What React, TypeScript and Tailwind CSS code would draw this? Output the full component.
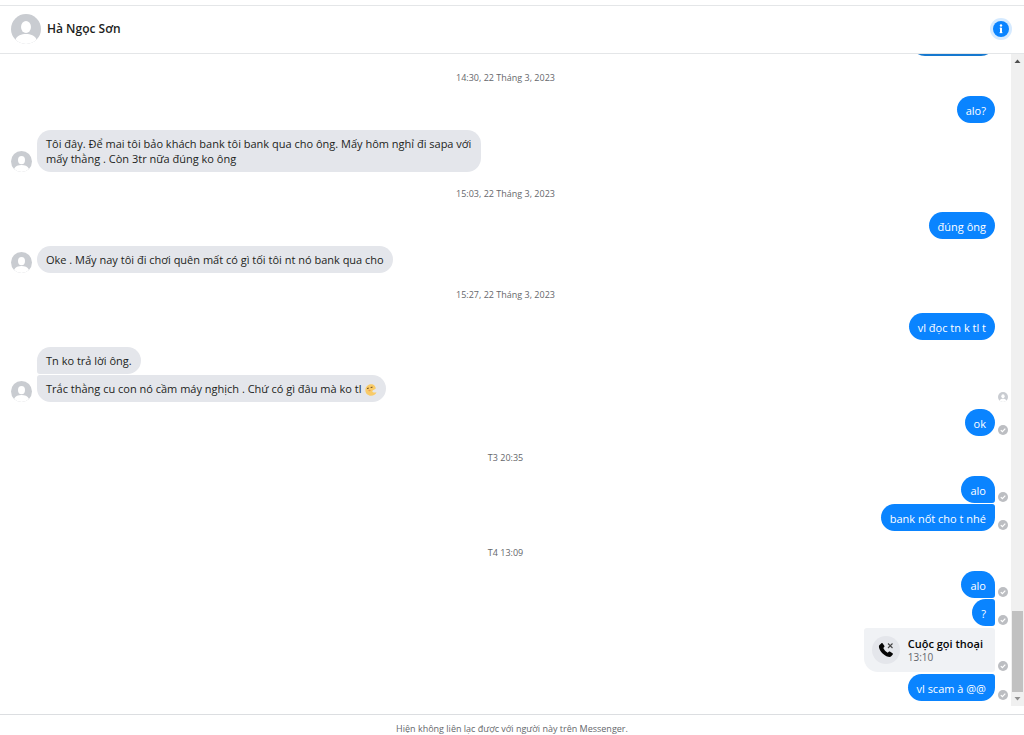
import React from "react";

const SHAPES = {
  single: "rounded-[14px]",
  rightFirst: "rounded-[14px] rounded-br-[3px]",
  rightMiddle: "rounded-[14px] rounded-r-[3px]",
  rightLast: "rounded-[14px] rounded-tr-[3px]",
  leftFirst: "rounded-[14px] rounded-bl-[3px]",
  leftLast: "rounded-[14px] rounded-tl-[3px]",
};
type Shape = keyof typeof SHAPES;

function Avatar({ className }: { className: string }) {
  return (
    <svg viewBox="0 0 30 30" className={className} role="img" aria-label="Hà Ngọc Sơn">
      <clipPath id="avatar-disc">
        <circle cx="15" cy="15" r="15" />
      </clipPath>
      <g clipPath="url(#avatar-disc)">
        <rect width="30" height="30" fill="#c9ccd1" />
        <ellipse cx="15" cy="13" rx="5" ry="6" fill="#fff" />
        <path d="M4.500 30V25.500C6 21.500 10.500 20 15 20S24 21.500 25.500 25.500V30Z" fill="#fff" />
      </g>
    </svg>
  );
}

function Delivered() {
  return (
    <svg viewBox="0 0 10 10" className="mb-px size-2.5" role="img" aria-label="Đã gửi">
      <circle cx="5" cy="5" r="5" fill="#bcbec2" />
      <path d="M2.800 5.100 4.400 6.700 7.300 3.600" fill="none" stroke="#fff" strokeWidth="1.200" />
    </svg>
  );
}

function MoonFace() {
  return (
    <svg viewBox="0 0 12 12" className="ml-1 inline-block size-3" role="img" aria-label="mặt trăng">
      <path d="M8 .5C4.500-.4 .8 1.800 .4 5.500C0 9 2.800 11.700 6 11.700C8.600 11.700 10.800 10.300 11.500 8.300C10.300 8.800 8.600 8.700 7.700 8C7.200 7.500 7.300 6.700 8 6.300L10.700 4.800C10.800 3 9.800 1.200 8 .5Z" fill="#f8cb69" />
      <path d="M2 4.500 3.800 4.100M5.700 3.500 7.500 3.200" stroke="#6b4a1f" strokeWidth="1" />
      <ellipse cx="4.500" cy="6.500" rx="1.200" ry=".8" fill="#f09a4a" />
    </svg>
  );
}

function Stamp({ children }: { children: React.ReactNode }) {
  return (
    <div className="flex h-10 items-center justify-center pt-1">
      <time className="text-[9px] leading-4 text-[#65676b]">{children}</time>
    </div>
  );
}

function Sent({ text, shape = "single", status }: { text: string; shape?: Shape; status?: boolean }) {
  return (
    <div className="flex items-end justify-end">
      <p className={`bg-[#0a84ff] px-[9px] pt-[7px] pb-[5px] text-white ${SHAPES[shape]}`}>{text}</p>
      <span className="flex w-4 justify-center">{status && <Delivered />}</span>
    </div>
  );
}

function Received({
  children,
  shape = "single",
  avatar = true,
  seen,
}: {
  children: React.ReactNode;
  shape?: Shape;
  avatar?: boolean;
  seen?: boolean;
}) {
  return (
    <div className="flex items-end pl-[11px]">
      <span className="w-[26px] shrink-0">{avatar && <Avatar className="size-[21px]" />}</span>
      <p className={`max-w-[444px] bg-[#e4e6eb] px-[9px] py-1.5 text-[#1c1e21] ${SHAPES[shape]}`}>{children}</p>
      {seen && (
        <span className="ml-auto flex w-4 justify-center">
          <Avatar className="size-2.5" />
        </span>
      )}
    </div>
  );
}

function MissedCall() {
  return (
    <div className="my-px flex items-end justify-end">
      <div className="flex h-11 items-center gap-2 rounded-[3px] rounded-bl-[14px] bg-[#f0f2f5] pr-3 pl-2">
        <span className="flex size-7 items-center justify-center rounded-full bg-[#e4e6eb]">
          <svg viewBox="0 0 16 16" className="size-4" aria-hidden="true">
            <path
              d="M1.300 3.200 3.200 1.400C3.700 1 4.300 1 4.700 1.500L6.300 3.700C6.700 4.200 6.600 4.700 6.200 5.100L5.300 6.100C6 7.900 7.800 9.800 9.700 10.700L10.800 9.800C11.200 9.400 11.800 9.400 12.200 9.700L14.500 11.300C15 11.700 15 12.300 14.600 12.700L12.900 14.500C11.900 15.500 8 14.700 4.600 11.400C1.300 8.100 .3 4.400 1.300 3.200Z"
              fill="#050505"
            />
            <path d="M10 1.500 14.500 6M14.500 1.500 10 6" stroke="#444" strokeWidth="1.100" />
          </svg>
        </span>
        <div>
          <p className="text-[11px] leading-[15px] font-semibold text-[#050505]">Cuộc gọi thoại</p>
          <p className="text-[10px] leading-[13px] text-[#65676b]">13:10</p>
        </div>
      </div>
      <span className="flex w-4 justify-center">
        <Delivered />
      </span>
    </div>
  );
}

function Stack({ children }: { children: React.ReactNode }) {
  return <div className="flex flex-col gap-px">{children}</div>;
}

function Exchange({ children }: { children: React.ReactNode }) {
  return <div className="flex flex-col gap-[7px]">{children}</div>;
}

export default function App() {
  return (
    <div className="flex h-screen flex-col overflow-hidden bg-white pt-[5px] font-['Open_Sans','Noto_Sans',sans-serif] text-[11px] leading-[15px]">
      <header className="flex h-[49px] shrink-0 items-center justify-between border-y border-[#e4e6e8] pr-3 pb-0.5 pl-[11px]">
        <div className="flex items-center gap-1.5">
          <Avatar className="size-[30px]" />
          <h1 className="text-xs leading-4 font-semibold text-[#1c1e21]">Hà Ngọc Sơn</h1>
        </div>
        <button type="button" aria-label="Thông tin" className="flex size-[22px] items-center justify-center rounded-full bg-[#d5eaff]">
          <svg viewBox="0 0 16 16" className="size-4" aria-hidden="true">
            <circle cx="8" cy="8" r="8" fill="#0a84ff" />
            <circle cx="8" cy="4.500" r="1.200" fill="#fff" />
            <path d="M8 6.800V12" fill="none" stroke="#fff" strokeWidth="2" />
            <path d="M6.700 7.200H8M6.500 11.700H9.500" fill="none" stroke="#fff" strokeWidth=".8" />
          </svg>
        </button>
      </header>

      <div className="flex min-h-0 flex-1">
        <main className="min-w-0 flex-1 overflow-hidden">
          <div className="flex h-0.5 items-end justify-end overflow-hidden pr-4" aria-hidden="true">
            <div className="h-7 w-[84px] shrink-0 rounded-[14px] bg-[#1578cf]" />
          </div>
          <Stamp>14:30, 22 Tháng 3, 2023</Stamp>
          <Exchange>
            <Sent text="alo?" />
            <Received>
              Tôi đây. Để mai tôi bảo khách bank tôi bank qua cho ông. Mấy hôm nghỉ đi sapa với mấy thằng . Còn 3tr nữa đúng ko ông
            </Received>
          </Exchange>
          <Stamp>15:03, 22 Tháng 3, 2023</Stamp>
          <Exchange>
            <Sent text="đúng ông" />
            <Received>Oke . Mấy nay tôi đi chơi quên mất có gì tối tôi nt nó bank qua cho</Received>
          </Exchange>
          <Stamp>15:27, 22 Tháng 3, 2023</Stamp>
          <Exchange>
            <Sent text="vl đọc tn k tl t" />
            <Stack>
              <Received shape="leftFirst" avatar={false}>
                Tn ko trả lời ông.
              </Received>
              <Received shape="leftLast" seen>
                Trắc thằng cu con nó cầm máy nghịch . Chứ có gì đâu mà ko tl
                <MoonFace />
              </Received>
            </Stack>
            <Sent text="ok" status />
          </Exchange>
          <Stamp>T3 20:35</Stamp>
          <Stack>
            <Sent text="alo" shape="rightFirst" status />
            <Sent text="bank nốt cho t nhé" shape="rightLast" status />
          </Stack>
          <Stamp>T4 13:09</Stamp>
          <Stack>
            <Sent text="alo" shape="rightFirst" status />
            <Sent text="?" shape="rightMiddle" status />
            <MissedCall />
            <Sent text="vl scam à @@" shape="rightLast" status />
          </Stack>
        </main>
        <div className="flex w-[13px] shrink-0 flex-col items-center bg-[#f0f0f0]" aria-hidden="true">
          <svg viewBox="0 0 13 14" className="h-3.5 w-[13px]">
            <path d="M3.500 9 6.500 5.500 9.500 9Z" fill="#505050" />
          </svg>
          <div className="flex w-[11px] flex-1 flex-col justify-end">
            <div className="h-[13%] bg-[#c1c1c1]" />
          </div>
          <svg viewBox="0 0 13 14" className="h-3.5 w-[13px]">
            <path d="M3.500 5 6.500 8.500 9.500 5Z" fill="#909090" />
          </svg>
        </div>
      </div>

      <footer className="mt-2 h-[21px] shrink-0 border-t border-[#dcdee1] pt-1.5 text-center text-[9px] leading-4 text-[#65676b]">
        Hiện không liên lạc được với người này trên Messenger.
      </footer>
    </div>
  );
}
